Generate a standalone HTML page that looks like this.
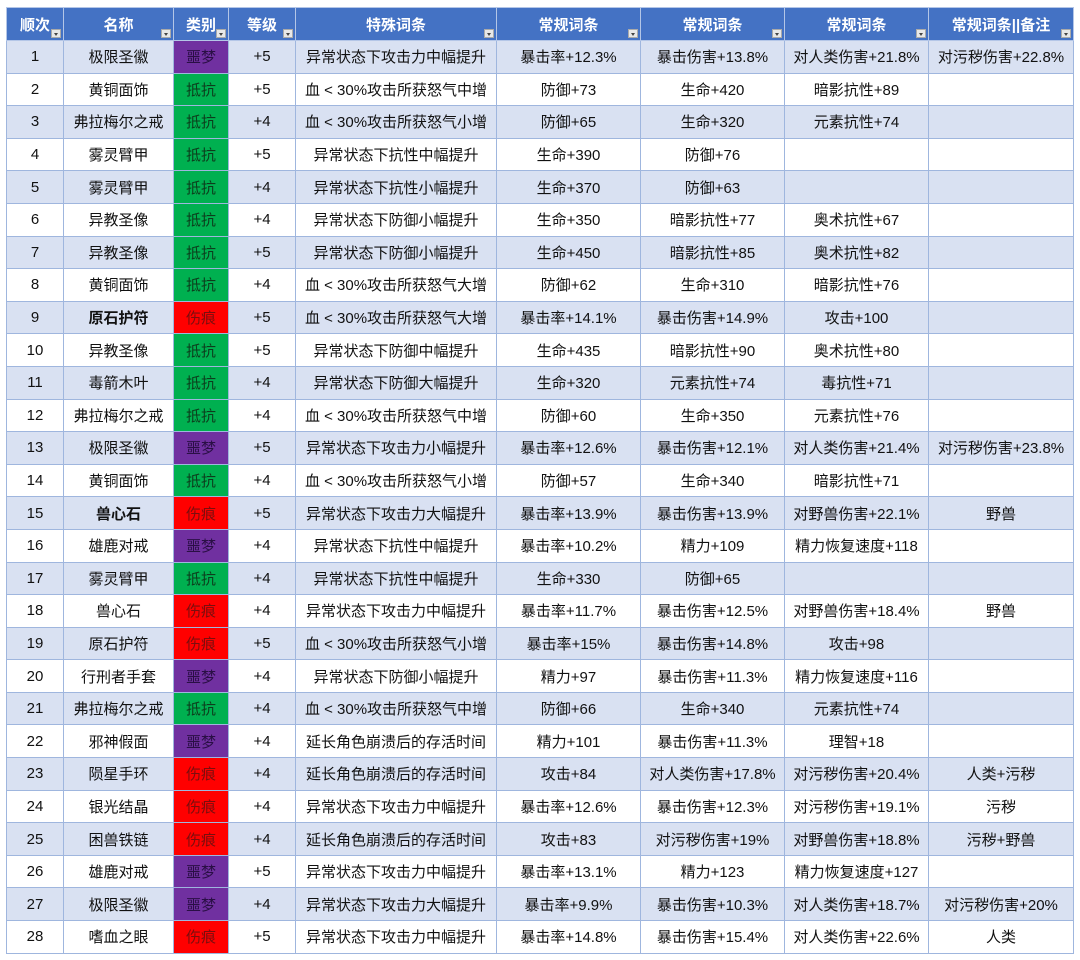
<!DOCTYPE html>
<html><head><meta charset="utf-8"><style>
html,body{margin:0;padding:0;background:#fff;width:1080px;height:960px;overflow:hidden}
table{position:absolute;left:6px;top:7px;border-collapse:collapse;table-layout:fixed;font-family:"Liberation Sans","Noto Sans CJK SC",sans-serif;font-size:15px;color:#111}
td,th{border:1px solid #9fb6de;text-align:center;padding:0;white-space:nowrap;overflow:hidden;height:31.6px}
th{background:#4472C4;color:#fff;font-weight:bold;height:32px;position:relative;border-color:#b4c6e7}
th i{position:absolute;right:2px;bottom:2px;width:10px;height:9px;background:#e8e8e8;border:1px solid #aaa;box-sizing:border-box}
th i:after{content:"";position:absolute;left:2px;top:3px;border-left:2.5px solid transparent;border-right:2.5px solid transparent;border-top:3px solid #444}
tr.b td{background:#D9E1F2}
td.p{background:#7030A0!important;color:#2a0f45}
td.g{background:#00B050!important;color:#0c3d1c}
td.r{background:#FF0000!important;color:#7a0e0e}
td.bd{font-weight:bold}
</style></head><body>
<table>
<colgroup><col style="width:57px"><col style="width:110px"><col style="width:55px"><col style="width:67px"><col style="width:201px"><col style="width:144px"><col style="width:144px"><col style="width:144px"><col style="width:145px"></colgroup>
<tr><th>顺次<i></i></th><th>名称<i></i></th><th>类别<i></i></th><th>等级<i></i></th><th>特殊词条<i></i></th><th>常规词条<i></i></th><th>常规词条<i></i></th><th>常规词条<i></i></th><th>常规词条||备注<i></i></th></tr>
<tr class="b"><td>1</td><td>极限圣徽</td><td class="p">噩梦</td><td>+5</td><td>异常状态下攻击力中幅提升</td><td>暴击率+12.3%</td><td>暴击伤害+13.8%</td><td>对人类伤害+21.8%</td><td>对污秽伤害+22.8%</td></tr>
<tr><td>2</td><td>黄铜面饰</td><td class="g">抵抗</td><td>+5</td><td>血 &lt; 30%攻击所获怒气中增</td><td>防御+73</td><td>生命+420</td><td>暗影抗性+89</td><td></td></tr>
<tr class="b"><td>3</td><td>弗拉梅尔之戒</td><td class="g">抵抗</td><td>+4</td><td>血 &lt; 30%攻击所获怒气小增</td><td>防御+65</td><td>生命+320</td><td>元素抗性+74</td><td></td></tr>
<tr><td>4</td><td>雾灵臂甲</td><td class="g">抵抗</td><td>+5</td><td>异常状态下抗性中幅提升</td><td>生命+390</td><td>防御+76</td><td></td><td></td></tr>
<tr class="b"><td>5</td><td>雾灵臂甲</td><td class="g">抵抗</td><td>+4</td><td>异常状态下抗性小幅提升</td><td>生命+370</td><td>防御+63</td><td></td><td></td></tr>
<tr><td>6</td><td>异教圣像</td><td class="g">抵抗</td><td>+4</td><td>异常状态下防御小幅提升</td><td>生命+350</td><td>暗影抗性+77</td><td>奥术抗性+67</td><td></td></tr>
<tr class="b"><td>7</td><td>异教圣像</td><td class="g">抵抗</td><td>+5</td><td>异常状态下防御小幅提升</td><td>生命+450</td><td>暗影抗性+85</td><td>奥术抗性+82</td><td></td></tr>
<tr><td>8</td><td>黄铜面饰</td><td class="g">抵抗</td><td>+4</td><td>血 &lt; 30%攻击所获怒气大增</td><td>防御+62</td><td>生命+310</td><td>暗影抗性+76</td><td></td></tr>
<tr class="b"><td>9</td><td class="bd">原石护符</td><td class="r">伤痕</td><td>+5</td><td>血 &lt; 30%攻击所获怒气大增</td><td>暴击率+14.1%</td><td>暴击伤害+14.9%</td><td>攻击+100</td><td></td></tr>
<tr><td>10</td><td>异教圣像</td><td class="g">抵抗</td><td>+5</td><td>异常状态下防御中幅提升</td><td>生命+435</td><td>暗影抗性+90</td><td>奥术抗性+80</td><td></td></tr>
<tr class="b"><td>11</td><td>毒箭木叶</td><td class="g">抵抗</td><td>+4</td><td>异常状态下防御大幅提升</td><td>生命+320</td><td>元素抗性+74</td><td>毒抗性+71</td><td></td></tr>
<tr><td>12</td><td>弗拉梅尔之戒</td><td class="g">抵抗</td><td>+4</td><td>血 &lt; 30%攻击所获怒气中增</td><td>防御+60</td><td>生命+350</td><td>元素抗性+76</td><td></td></tr>
<tr class="b"><td>13</td><td>极限圣徽</td><td class="p">噩梦</td><td>+5</td><td>异常状态下攻击力小幅提升</td><td>暴击率+12.6%</td><td>暴击伤害+12.1%</td><td>对人类伤害+21.4%</td><td>对污秽伤害+23.8%</td></tr>
<tr><td>14</td><td>黄铜面饰</td><td class="g">抵抗</td><td>+4</td><td>血 &lt; 30%攻击所获怒气小增</td><td>防御+57</td><td>生命+340</td><td>暗影抗性+71</td><td></td></tr>
<tr class="b"><td>15</td><td class="bd">兽心石</td><td class="r">伤痕</td><td>+5</td><td>异常状态下攻击力大幅提升</td><td>暴击率+13.9%</td><td>暴击伤害+13.9%</td><td>对野兽伤害+22.1%</td><td>野兽</td></tr>
<tr><td>16</td><td>雄鹿对戒</td><td class="p">噩梦</td><td>+4</td><td>异常状态下抗性中幅提升</td><td>暴击率+10.2%</td><td>精力+109</td><td>精力恢复速度+118</td><td></td></tr>
<tr class="b"><td>17</td><td>雾灵臂甲</td><td class="g">抵抗</td><td>+4</td><td>异常状态下抗性中幅提升</td><td>生命+330</td><td>防御+65</td><td></td><td></td></tr>
<tr><td>18</td><td>兽心石</td><td class="r">伤痕</td><td>+4</td><td>异常状态下攻击力中幅提升</td><td>暴击率+11.7%</td><td>暴击伤害+12.5%</td><td>对野兽伤害+18.4%</td><td>野兽</td></tr>
<tr class="b"><td>19</td><td>原石护符</td><td class="r">伤痕</td><td>+5</td><td>血 &lt; 30%攻击所获怒气小增</td><td>暴击率+15%</td><td>暴击伤害+14.8%</td><td>攻击+98</td><td></td></tr>
<tr><td>20</td><td>行刑者手套</td><td class="p">噩梦</td><td>+4</td><td>异常状态下防御小幅提升</td><td>精力+97</td><td>暴击伤害+11.3%</td><td>精力恢复速度+116</td><td></td></tr>
<tr class="b"><td>21</td><td>弗拉梅尔之戒</td><td class="g">抵抗</td><td>+4</td><td>血 &lt; 30%攻击所获怒气中增</td><td>防御+66</td><td>生命+340</td><td>元素抗性+74</td><td></td></tr>
<tr><td>22</td><td>邪神假面</td><td class="p">噩梦</td><td>+4</td><td>延长角色崩溃后的存活时间</td><td>精力+101</td><td>暴击伤害+11.3%</td><td>理智+18</td><td></td></tr>
<tr class="b"><td>23</td><td>陨星手环</td><td class="r">伤痕</td><td>+4</td><td>延长角色崩溃后的存活时间</td><td>攻击+84</td><td>对人类伤害+17.8%</td><td>对污秽伤害+20.4%</td><td>人类+污秽</td></tr>
<tr><td>24</td><td>银光结晶</td><td class="r">伤痕</td><td>+4</td><td>异常状态下攻击力中幅提升</td><td>暴击率+12.6%</td><td>暴击伤害+12.3%</td><td>对污秽伤害+19.1%</td><td>污秽</td></tr>
<tr class="b"><td>25</td><td>困兽铁链</td><td class="r">伤痕</td><td>+4</td><td>延长角色崩溃后的存活时间</td><td>攻击+83</td><td>对污秽伤害+19%</td><td>对野兽伤害+18.8%</td><td>污秽+野兽</td></tr>
<tr><td>26</td><td>雄鹿对戒</td><td class="p">噩梦</td><td>+5</td><td>异常状态下攻击力中幅提升</td><td>暴击率+13.1%</td><td>精力+123</td><td>精力恢复速度+127</td><td></td></tr>
<tr class="b"><td>27</td><td>极限圣徽</td><td class="p">噩梦</td><td>+4</td><td>异常状态下攻击力大幅提升</td><td>暴击率+9.9%</td><td>暴击伤害+10.3%</td><td>对人类伤害+18.7%</td><td>对污秽伤害+20%</td></tr>
<tr><td>28</td><td>嗜血之眼</td><td class="r">伤痕</td><td>+5</td><td>异常状态下攻击力中幅提升</td><td>暴击率+14.8%</td><td>暴击伤害+15.4%</td><td>对人类伤害+22.6%</td><td>人类</td></tr>
</table>
</body></html>
